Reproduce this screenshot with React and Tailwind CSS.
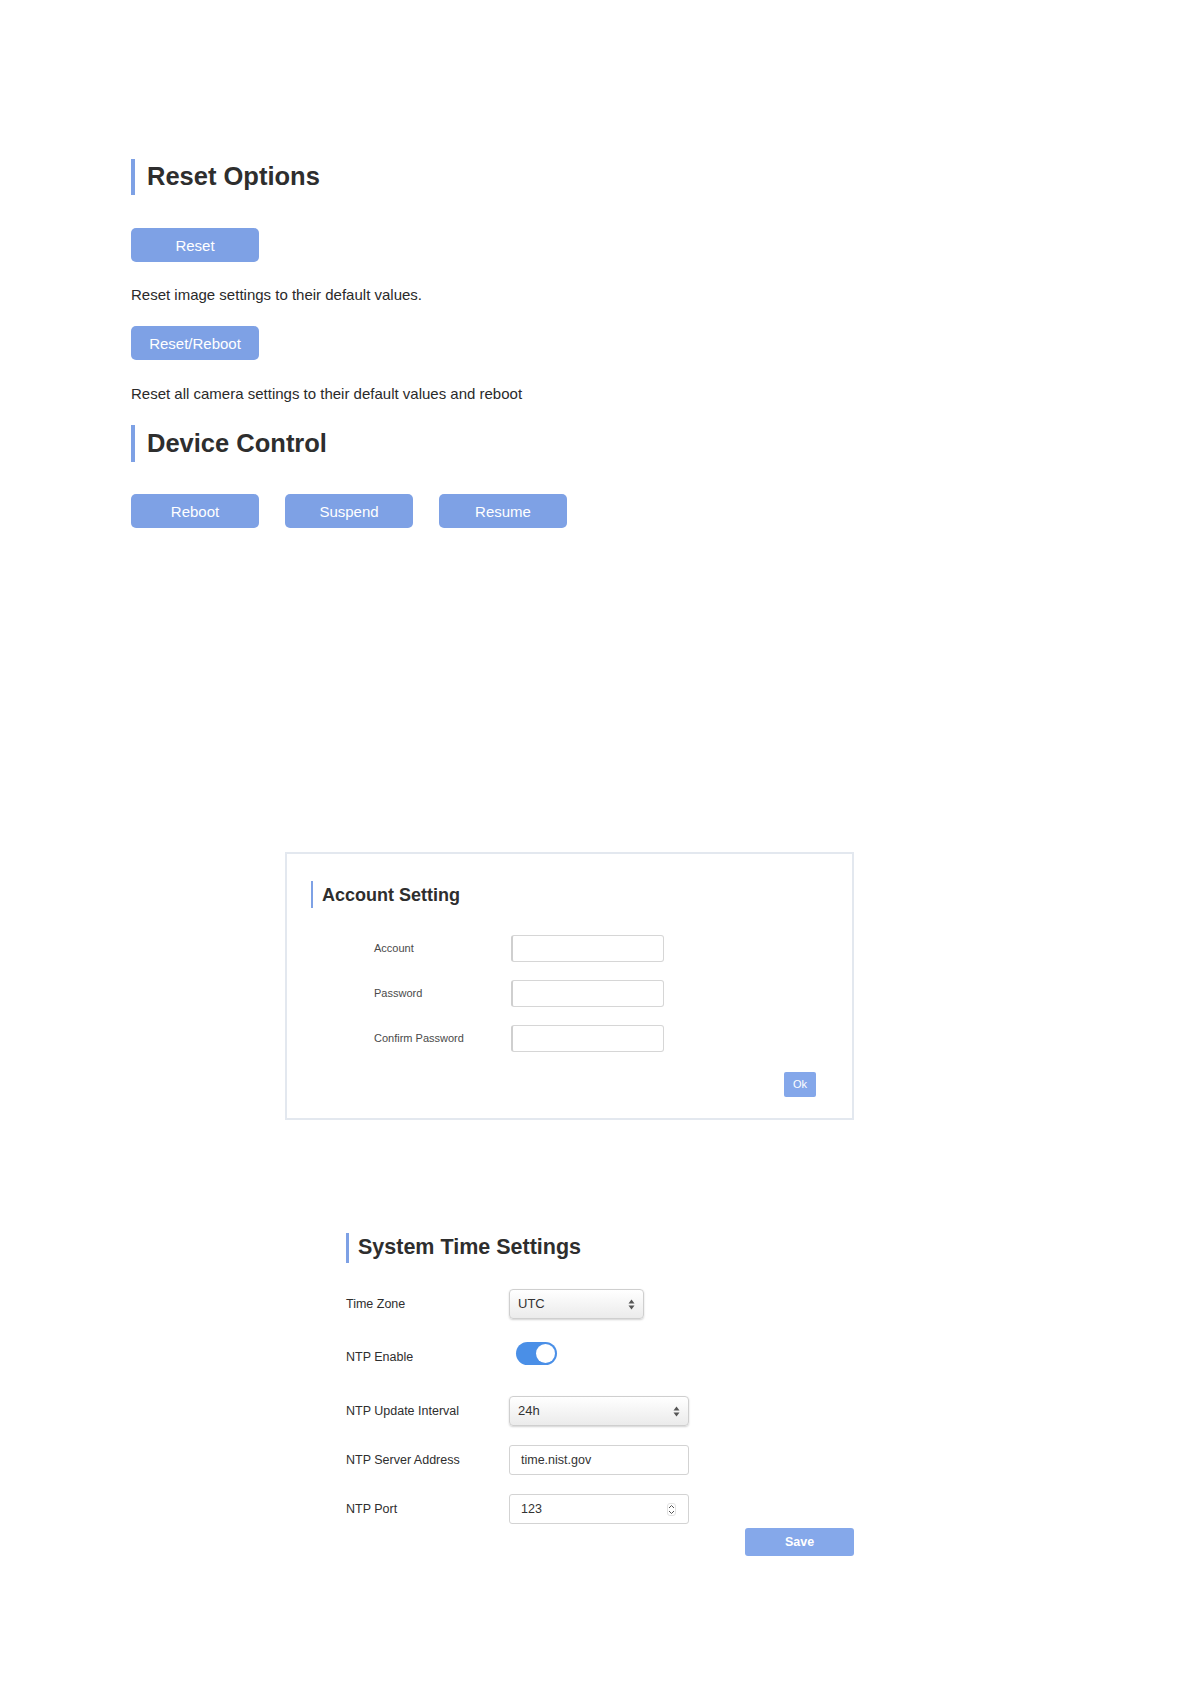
import React from 'react';

const font = { fontFamily: '"Liberation Sans", Arial, sans-serif' };

const SectionTitle = ({ children, className = '', barClass = 'w-[4px] h-[36px]', textClass = 'text-[26px]' }) => (
  <div className={`flex items-center ${className}`}>
    <div className={`bg-[#7ea1e5] shrink-0 ${barClass}`} />
    <h2 className={`font-bold text-[#2e2e2e] leading-none ${textClass}`}>{children}</h2>
  </div>
);

const BlueButton = ({ children }) => (
  <button className="w-[128px] h-[34px] rounded-[5px] bg-[#7ea1e5] text-white text-[15px] leading-none">
    {children}
  </button>
);

const SelectArrows = () => (
  <svg width="7" height="11" viewBox="0 0 7 11" className="shrink-0">
    <path d="M3.5 0.5 L6.5 4.5 L0.5 4.5 Z" fill="#555" />
    <path d="M3.5 10.5 L6.5 6.5 L0.5 6.5 Z" fill="#555" />
  </svg>
);

const FakeSelect = ({ value, width }) => (
  <div className={`${width} h-[30px] flex items-center justify-between pl-[8px] pr-[8px] rounded-[4px] border border-[#cfcfcf] bg-gradient-to-b from-[#ffffff] to-[#ebebeb] shadow-[0_1px_2px_rgba(0,0,0,0.18)] text-[13px] text-[#333]`}>
    <span>{value}</span>
    <SelectArrows />
  </div>
);

const AccountRow = ({ label }) => (
  <div className="flex items-center h-[27px]">
    <span className="w-[137px] text-[11px] text-[#4a4a4a]">{label}</span>
    <div className="w-[153px] h-[27px] rounded-[3px] border border-[#d6d6d6] border-l-2 border-l-[#cfcfcf] bg-white" />
  </div>
);

const TimeRow = ({ label, children, h = 'h-[30px]' }) => (
  <div className={`flex items-center ${h}`}>
    <span className="w-[163px] text-[12.5px] text-[#2e2e2e]">{label}</span>
    {children}
  </div>
);

export default function App() {
  return (
    <div className="min-h-[1684px] bg-white pt-[159px]" style={font}>
      {/* Reset options + device control */}
      <div className="ml-[131px]">
        <SectionTitle barClass="w-[4px] h-[36px] mr-[12px]" textClass="text-[25.5px]">Reset Options</SectionTitle>
        <div className="mt-[33px]">
          <BlueButton>Reset</BlueButton>
        </div>
        <p className="mt-[24px] text-[15px] leading-[18px] text-[#2a2a2a]">Reset image settings to their default values.</p>
        <div className="mt-[22px]">
          <BlueButton>Reset/Reboot</BlueButton>
        </div>
        <p className="mt-[25px] text-[15px] leading-[18px] text-[#2a2a2a]">Reset all camera settings to their default values and reboot</p>

        <SectionTitle className="mt-[22px]" barClass="w-[4px] h-[37px] mr-[12px]" textClass="text-[25.5px]">Device Control</SectionTitle>
        <div className="mt-[32px] flex gap-[26px]">
          <BlueButton>Reboot</BlueButton>
          <BlueButton>Suspend</BlueButton>
          <BlueButton>Resume</BlueButton>
        </div>
      </div>

      {/* Account setting card */}
      <div className="ml-[285px] mt-[324px] w-[569px] h-[268px] border-2 border-[#e3e8ef] bg-white pt-[27px] pl-[24px] pr-[36px]">
        <SectionTitle barClass="w-[2px] h-[27px] mr-[9px]" textClass="text-[18px]">Account Setting</SectionTitle>
        <div className="ml-[63px] mt-[27px] flex flex-col gap-[18px]">
          <AccountRow label="Account" />
          <AccountRow label="Password" />
          <AccountRow label="Confirm Password" />
        </div>
        <div className="mt-[20px] flex justify-end">
          <button className="w-[32px] h-[25px] rounded-[2px] bg-[#84a7ea] text-white text-[11px] leading-none">Ok</button>
        </div>
      </div>

      {/* System time settings */}
      <div className="ml-[346px] mt-[113px] w-[508px]">
        <SectionTitle barClass="w-[3px] h-[30px] mr-[9px]" textClass="text-[21.5px]">System Time Settings</SectionTitle>
        <div className="mt-[26px]">
          <TimeRow label="Time Zone">
            <FakeSelect value="UTC" width="w-[135px]" />
          </TimeRow>
        </div>
        <div className="mt-[23px]">
          <TimeRow label="NTP Enable">
            <div className="ml-[7px] mb-[7px] w-[41px] h-[23px] rounded-full bg-[#4a8fe7] flex items-center justify-end pr-[2px]">
              <div className="w-[19px] h-[19px] rounded-full bg-white" />
            </div>
          </TimeRow>
        </div>
        <div className="mt-[24px]">
          <TimeRow label="NTP Update Interval">
            <FakeSelect value="24h" width="w-[180px]" />
          </TimeRow>
        </div>
        <div className="mt-[19px]">
          <TimeRow label="NTP Server Address">
            <div className="w-[180px] h-[30px] flex items-center pl-[11px] rounded-[3px] border border-[#d3d3d3] bg-white text-[12.5px] text-[#333]">
              time.nist.gov
            </div>
          </TimeRow>
        </div>
        <div className="mt-[19px]">
          <TimeRow label="NTP Port">
            <div className="w-[180px] h-[30px] flex items-center justify-between pl-[11px] pr-[12px] rounded-[3px] border border-[#d3d3d3] bg-white text-[12.5px] text-[#333]">
              <span>123</span>
              <div className="w-[9px] h-[13px] rounded-[3px] border border-[#e2e2e2] flex items-center justify-center">
                <svg width="7" height="11" viewBox="0 0 7 11">
                  <path d="M1 4 L3.5 1.5 L6 4" fill="none" stroke="#555" strokeWidth="1" />
                  <path d="M1 7 L3.5 9.5 L6 7" fill="none" stroke="#555" strokeWidth="1" />
                </svg>
              </div>
            </div>
          </TimeRow>
        </div>
        <div className="mt-[4px] flex justify-end">
          <button className="w-[109px] h-[28px] rounded-[3px] bg-[#85a8ea] text-white text-[12.5px] font-bold leading-none">Save</button>
        </div>
      </div>
    </div>
  );
}
